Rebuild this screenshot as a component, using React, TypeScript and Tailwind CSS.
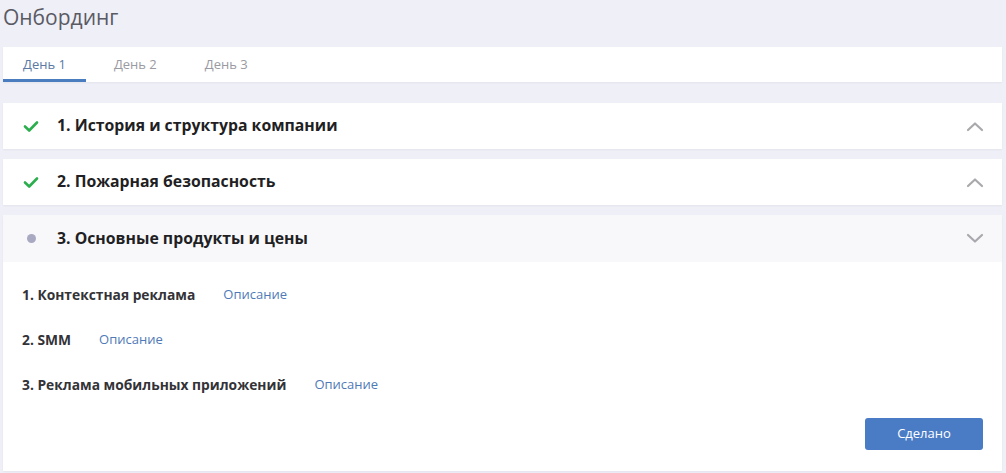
import React from "react";

const Check = () => (
  <svg width="16" height="13" viewBox="0 0 16 13" fill="none">
    <path d="M2 6.5 L6.2 10.5 L14 2.5" stroke="#2dae4e" strokeWidth="2.6" strokeLinecap="round" strokeLinejoin="round" />
  </svg>
);

const Chevron = ({ up }: { up: boolean }) => (
  <svg width="18" height="11" viewBox="0 0 18 11" fill="none">
    <path
      d={up ? "M2 9 L9 2.5 L16 9" : "M2 2 L9 8.5 L16 2"}
      stroke="#a9a9ad"
      strokeWidth="2.2"
      strokeLinecap="round"
      strokeLinejoin="round"
    />
  </svg>
);

const items = ["1. Контекстная реклама", "2. SMM", "3. Реклама мобильных приложений"];

export default function App() {
  return (
    <div
      className="w-[1006px] h-[473px] bg-[#efeff7] overflow-hidden"
      style={{ fontFamily: '"Open Sans", "Noto Sans", sans-serif' }}
    >
      <div className="pl-[3px] pr-[4px]">
        <h1 className="text-[21px] leading-[30px] pt-[2px] text-[#5a5a64] font-normal h-[47px]">Онбординг</h1>
        <div className="bg-white h-[35px] flex gap-2 shadow-[0_1px_2px_rgba(0,0,0,0.05)]">
          <div className="px-5 h-full flex items-center text-[13px] text-[#5b7aa3] border-b-[3px] border-[#4a7cc0] pt-[3px]">День 1</div>
          <div className="px-5 h-full flex items-center text-[13px] text-[#9a9aa2]">День 2</div>
          <div className="px-5 h-full flex items-center text-[13px] text-[#9a9aa2]">День 3</div>
        </div>

        <div className="mt-[21px] flex flex-col gap-[10px]">
          {["1. История и структура компании", "2. Пожарная безопасность"].map((t) => (
            <div key={t} className="bg-white h-[46px] flex items-center pl-[20px] pr-[18px] shadow-[0_1px_2px_rgba(0,0,0,0.05)]">
              <Check />
              <span className="ml-[18px] text-[15.8px] font-bold text-[#1f1f24] flex-1">{t}</span>
              <Chevron up />
            </div>
          ))}
          <div className="flex flex-col shadow-[0_1px_2px_rgba(0,0,0,0.05)]">
            <div className="bg-[#f8f8fb] h-[47px] flex items-center pl-[20px] pr-[18px]">
              <span className="w-[16px] flex justify-center">
                <span className="w-[9px] h-[9px] rounded-full bg-[#a9a9c2]" />
              </span>
              <span className="ml-[18px] text-[15.8px] font-bold text-[#1f1f24] flex-1">3. Основные продукты и цены</span>
              <Chevron up={false} />
            </div>
            <div className="bg-white h-[209px] pt-[22px] px-[19px] pb-[21px] flex flex-col">
              <div className="flex flex-col gap-[23px]">
                {items.map((it) => (
                  <div key={it} className="flex items-center h-[22px] gap-[28px]">
                    <span className="font-bold text-[13.8px] text-[#333338]">{it}</span>
                    <span className="text-[13px] text-[#4f7ab8]">Описание</span>
                  </div>
                ))}
              </div>
              <div className="mt-auto flex justify-end">
                <button className="w-[118px] h-[32px] rounded-[3px] bg-[#4a7cc6] text-white text-[13px]">Сделано</button>
              </div>
            </div>
          </div>
        </div>
      </div>
    </div>
  );
}
